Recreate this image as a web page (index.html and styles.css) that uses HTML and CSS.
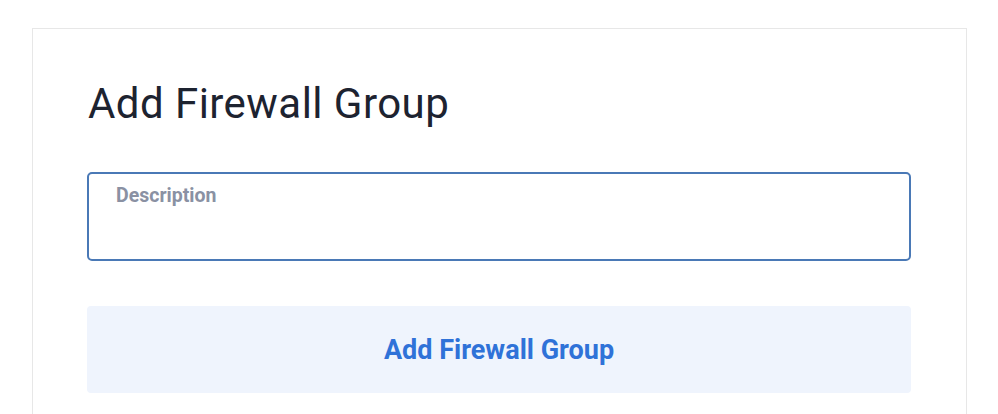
FILE: index.html
```html
<!DOCTYPE html>
<html>
<head>
<meta charset="utf-8">
<link rel="stylesheet" href="styles.css">
</head>
<body>
<div class="card">
  <h1 class="title">Add Firewall Group</h1>
  <label class="field">
    <span class="field-label">Description</span>
    <input class="field-input" type="text">
  </label>
  <button class="submit" type="button">Add Firewall Group</button>
</div>
</body>
</html>
```

FILE: styles.css
```css
html, body {
  margin: 0;
  padding: 0;
  background: #ffffff;
  font-family: Roboto, "Liberation Sans", sans-serif;
}
body {
  padding: 28px 31px 0 32px;
  height: 414px;
  box-sizing: border-box;
  overflow: hidden;
}
.card {
  border: 1px solid #e7e7e7;
  border-bottom: none;
  padding: 0 55px 0 54px;
  height: 400px;
  box-sizing: border-box;
}
.title {
  margin: 0;
  padding-top: 50px;
  font-size: 42px;
  font-weight: 400;
  letter-spacing: 0.45px;
  color: #1d2330;
  line-height: 50px;
  padding-left: 1px;
}
.field {
  display: flex;
  flex-direction: column;
  margin-top: 43px;
  height: 89px;
  box-sizing: border-box;
  border: 2px solid #4a79b6;
  border-radius: 5px;
  padding: 9px 27px 0;
}
.field-label {
  font-size: 19.5px;
  font-weight: 700;
  color: #8a91a3;
  line-height: 25px;
}
.field-input {
  border: none;
  outline: none;
  background: transparent;
  font: inherit;
  font-size: 18px;
  padding: 0;
  margin-top: 6px;
  height: 28px;
}
.submit {
  display: block;
  width: 100%;
  margin-top: 45px;
  height: 87px;
  border: none;
  border-radius: 4px;
  background: #eff4fd;
  color: #2f72d8;
  font-family: Roboto, "Liberation Sans", sans-serif;
  font-size: 27px;
  font-weight: 700;
}
```
